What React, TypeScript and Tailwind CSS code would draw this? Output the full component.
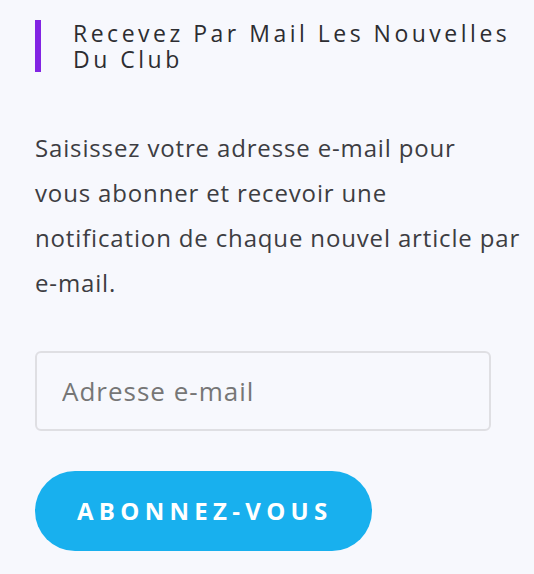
export default function App() {
  return (
    <div className="min-h-[574px] w-full bg-[#f7f8fd] font-['Open_Sans',sans-serif]">
      <div className="w-[534px] pl-[35px] pt-5">
        <h2 className="w-[480px] border-l-[6px] border-[#8224e3] pl-[32px] text-[23px] font-normal leading-[26px] tracking-[3.5px] text-[#2d2d31]">
          Recevez Par Mail Les Nouvelles Du Club
        </h2>
        <p className="mt-[53px] whitespace-nowrap text-[24px] leading-[45px] tracking-[0.85px] text-[#3d3d42]">
          Saisissez votre adresse e-mail pour
          <br />
          vous abonner et recevoir une
          <br />
          notification de chaque nouvel article par
          <br />
          e-mail.
        </p>
        <form className="mt-[46px] flex flex-col items-start gap-10">
          <input
            type="email"
            placeholder="Adresse e-mail"
            className="h-20 w-[456px] rounded-md border-2 border-[#dfdfe3] bg-transparent px-[25px] text-[26px] tracking-[1px] text-[#333] outline-none placeholder:text-[#767676]"
          />
          <button
            type="button"
            className="h-20 rounded-full bg-[#18b0ee] pl-[42px] pr-[39px] text-[24px] font-bold uppercase tracking-[5.3px] text-white"
          >
            Abonnez-vous
          </button>
        </form>
      </div>
    </div>
  );
}
